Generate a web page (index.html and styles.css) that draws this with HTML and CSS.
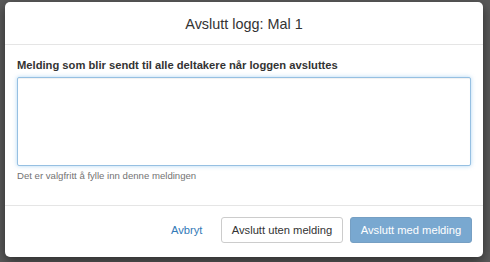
FILE: index.html
```html
<!DOCTYPE html>
<html lang="no">
<head>
<meta charset="utf-8">
<title>Avslutt logg</title>
<link rel="stylesheet" href="styles.css">
</head>
<body>
<div class="backdrop">
  <div class="modal">
    <div class="modal-header">
      <h4 class="modal-title">Avslutt logg: Mal 1</h4>
    </div>
    <div class="modal-body">
      <div class="form-group">
        <label class="label" for="msg">Melding som blir sendt til alle deltakere når loggen avsluttes</label>
        <textarea id="msg" class="textarea"></textarea>
        <p class="help">Det er valgfritt å fylle inn denne meldingen</p>
      </div>
    </div>
    <div class="modal-footer">
      <button class="btn btn-link">Avbryt</button>
      <button class="btn btn-default">Avslutt uten melding</button>
      <button class="btn btn-primary" disabled>Avslutt med melding</button>
    </div>
  </div>
</div>
</body>
</html>
```
FILE: styles.css
```css
* { box-sizing: border-box; }
html, body {
  margin: 0;
  padding: 0;
  width: 490px;
  height: 262px;
  overflow: hidden;
}
body {
  background: #5a5a5a;
  font-family: "Liberation Sans", Arial, sans-serif;
  color: #333;
}
.backdrop {
  padding: 2px 0 0 5px;
}
.modal {
  width: 478px;
  height: 255px;
  background: #fff;
  border-radius: 5px;
  box-shadow: 0 4px 12px rgba(0, 0, 0, 0.5);
  display: flex;
  flex-direction: column;
}
.modal-header {
  height: 43px;
  border-bottom: 1px solid #e5e5e5;
  display: flex;
  align-items: center;
  justify-content: center;
}
.modal-title {
  margin: 0;
  font-size: 14.4px;
  font-weight: 400;
  line-height: 20px;
  padding-top: 2px;
}
.modal-body {
  padding: 12px;
  height: 160px;
}
.form-group {
  display: flex;
  flex-direction: column;
}
.label {
  font-weight: 700;
  font-size: 11.2px;
  line-height: 16px;
  margin-bottom: 4px;
}
.textarea {
  width: 454px;
  height: 89px;
  margin: 0;
  border: 1px solid #96c0e2;
  border-radius: 2px;
  box-shadow: inset 0 1px 1px rgba(0,0,0,.06), 0 0 4px rgba(102,175,233,.5);
  resize: none;
  outline: none;
  font-family: inherit;
}
.help {
  margin: 3px 0 0;
  font-size: 9.6px;
  line-height: 13px;
  color: #737373;
}
.modal-footer {
  border-top: 1px solid #e5e5e5;
  flex: 1;
  display: flex;
  justify-content: flex-end;
  align-items: flex-start;
  padding: 11px 11px 0 0;
  gap: 7px;
}
.btn {
  font-family: inherit;
  font-size: 11.2px;
  line-height: 16px;
  height: 26px;
  padding: 4px 9.6px;
  border-radius: 3px;
  border: 1px solid transparent;
  margin: 0;
}
.btn-link {
  background: transparent;
  color: #337ab7;
  margin-right: 1px;
}
.btn-default {
  background: #fff;
  border-color: #ccc;
  color: #333;
  width: 122px;
}
.btn-primary {
  background: #337ab7;
  border-color: #2e6da4;
  color: #fff;
  opacity: 0.65;
  width: 122px;
}
```
